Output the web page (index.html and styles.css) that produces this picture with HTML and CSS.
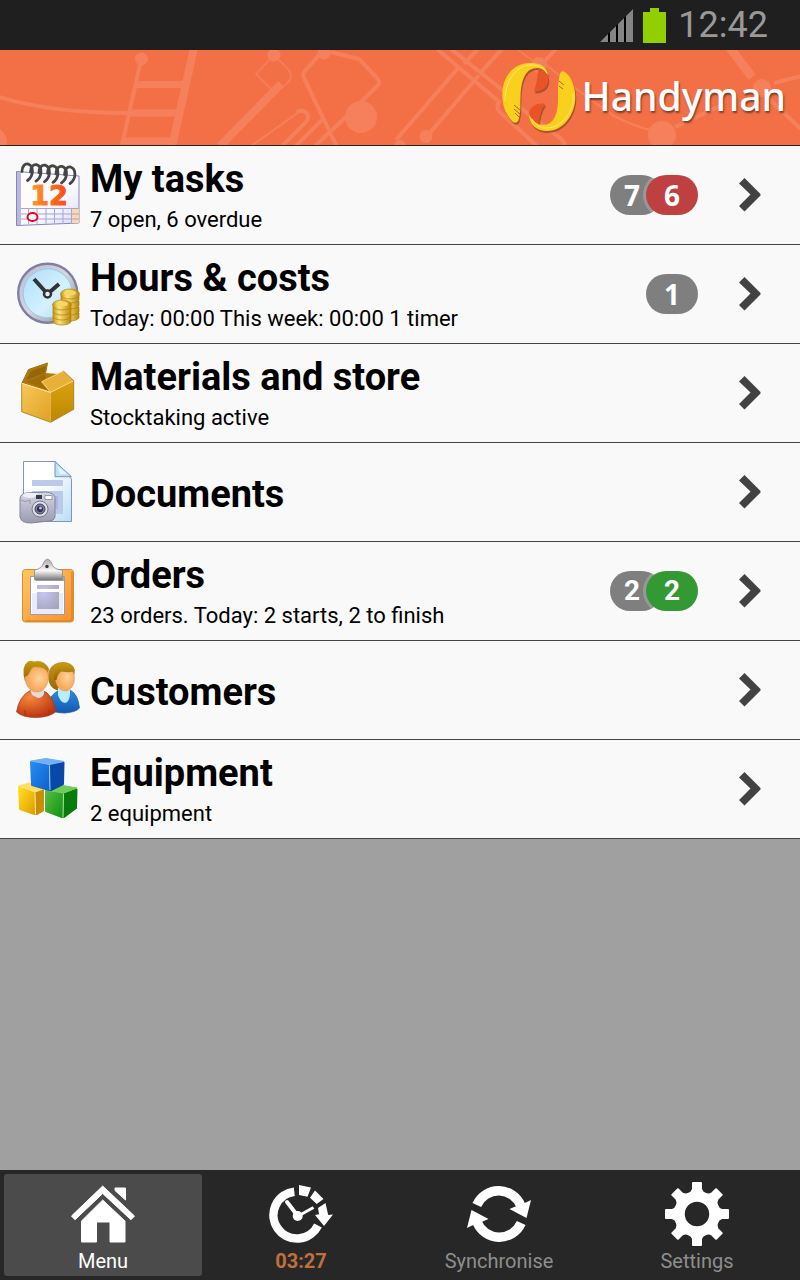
FILE: index.html
```html
<!DOCTYPE html>
<html lang="en">
<head>
<meta charset="utf-8">
<meta name="viewport" content="width=device-width, initial-scale=1">
<title>Handyman</title>
<link rel="stylesheet" href="styles.css">
</head>
<body>
<div class="status">
  <svg class="status-signal" viewBox="0 0 33 33" aria-hidden="true"><path fill="#000" d="M0 33 33 0v33z"/><path fill="#858585" d="M0 33 8 25v8zM10 33V23l6-6v16zM18 33V15l6-6v24zM26 33V7l7-7v33z"/></svg>
  <svg class="status-battery" viewBox="0 0 23 35" aria-hidden="true"><path fill="#92cf00" d="M0 4h7V0h9v4h7v31H0z"/></svg>
  <time class="status-time">12:42</time>
</div>

<header class="brand">
  <svg class="brand-art" viewBox="0 0 800 95" preserveAspectRatio="xMinYMin slice" aria-hidden="true">
    <g fill="none" stroke="#f6805b" stroke-width="4">
      <path d="M-4 46Q50 63 128 63"/>
      <path d="M141 10 122 95"/><path stroke-width="8" d="M194-2 172 97"/>
      <path stroke-width="7" d="M135 34.500h48M130 63h48M123 91h49"/>
      <path stroke-width="1.500" d="m270 9-14 15 16 16M278 9l9 9q8 8 0 15l-4 4"/>
      <path stroke-width="8" d="m281 34-61 62"/>
      <path stroke-width="2" d="m251 96 48-34"/><path d="M297 62c9-4 14 4 9 10l-24 24M324 68l-28 28"/>
      <path d="m321 3-16 18q-3 3-1 7l33 69M331 2l28 7 19 20q3 4-1 7l-18 18M347 66l-32 30"/>
      <path d="M437-1 497 50M451-1 510 46M510 50 560 88q6 5 4 10M478-1l-14 15M502-1l-20 22M458 18 396 90M479 25l-56 66"/>
      <path stroke-width="1.500" d="m517-1 24 18"/><path d="m556-1-14 15M500 50q-6 8 2 14l35 32"/>
      <path stroke-width="2" d="M545 14q38 31 69 52 20 10 36 14"/>
      <path d="m675 77 45-21M774 33l28-7"/><path stroke-width="9" d="m730-2 22 29"/>
      <path d="m768 48 34 32"/>
    </g>
    <g fill="#f6805b"><circle cx="-8" cy="92" r="15"/><circle cx="141.500" cy="9" r="6.500"/><circle cx="274" cy="5" r="6.500"/><circle cx="324" cy="3" r="6.500"/><circle cx="361" cy="67" r="16"/><circle cx="426" cy="86.500" r="6.500"/><circle cx="539" cy="15" r="8"/><circle cx="662" cy="85" r="14"/><circle cx="762" cy="38" r="9"/><circle cx="400" cy="96" r="6"/></g>
  </svg>
  <svg class="brand-mark" viewBox="0 0 78 74" aria-hidden="true">
    <defs>
      <path id="palms" d="M48.300 14.500C46 4 39 2 30 2 14 2 2.300 15 2.300 34c0 12 5 22 10.700 27 3 1.500 5.500.5 6-4 2-7 1-14 1.500-21C21 18 26 7 37 7c5 0 8 3 11.300 7.500zM60 13c1-4 4-3 6-1 6 5 9.300 14 9.300 24C75.300 54 63 70 47 70c-10 0-18-6-18-17 4 8 9 11 15 11 10-1 14-11 14-26 0-10 0-17 2-25z"/>
      <path id="fingers" d="M38.500 8c7 1 11 7 9.500 13-1 6-7 10-14 9.300 2.500-7 3.500-15 4.500-22.300zM45 43c-9-2-16 4-16 10 1 5 5 9 10 11 0-8 2-15 6-21z"/>
    </defs>
    <g transform="translate(1 2)" fill="#8d4428" opacity=".7"><use href="#palms"/><use href="#fingers"/></g>
    <use href="#fingers" fill="#ea5328"/>
    <use href="#palms" fill="#f9d01c"/>
    <path fill="none" stroke="#fce476" d="M5 40C5 20 16 4 31 4c8 0 13 3 16 8M73 33c2 18-12 34-26 34-7 0-12-3-15-9"/>
    <path fill="none" stroke="#a8662a" d="m14 44 6 5M14 48l6 5M15 52l4 4M59 20l5 4M59 25l4 3"/>
  </svg>
  <h1 class="brand-name">Handyman</h1>
</header>

<main class="content">
<ul class="menu">
  <li><a class="item" href="#tasks">
    <svg class="item-icon" viewBox="0 0 64 64" aria-hidden="true">
      <defs><linearGradient id="page" x1="0" y1="0" x2="1" y2="1"><stop offset="0" stop-color="#fff"/><stop offset=".6" stop-color="#fafaff"/><stop offset="1" stop-color="#d8d8f6"/></linearGradient><linearGradient id="fire" x1="0" y1="0" x2="1" y2="0"><stop offset="0" stop-color="#ff9a2e"/><stop offset="1" stop-color="#fb4910"/></linearGradient></defs>
      <path fill="url(#page)" stroke="#8585b5" d="M.5 9.500 63 14v47L.5 63.500z"/><path fill="#b9b9e6" d="M1 10h4v53H1z"/>
      <path fill="#ffd5aa" d="M55 47h8v14h-8z"/>
      <path fill="none" stroke="#a5a5d8" d="M5 46.500h58M5 52h58M5 57h58M12.500 47v15M21 47v15M30 47v15M38.500 47v15M47 47v15M55.500 47v15"/>
      <ellipse cx="16.500" cy="55" rx="5" ry="4" fill="#fff" stroke="#f00019" stroke-width="2"/>
      <text class="calendar-day" x="33" y="43" text-anchor="middle" fill="url(#fire)" stroke="url(#fire)">12</text>
      <g fill="none" stroke="#454545" stroke-width="2.800" stroke-linecap="round"><path id="ring" d="M6 9.500C6 4 9 1.500 12 2c6 2 6 12-.5 16.500"/><use href="#ring" x="8.500" y=".6"/><use href="#ring" x="17" y="1.200"/><use href="#ring" x="25.500" y="1.800"/><use href="#ring" x="34" y="2.400"/><use href="#ring" x="42.500" y="3"/></g>
    </svg>
    <span class="item-text"><span class="item-title">My tasks</span><span class="item-note">7 open, 6 overdue</span></span>
    <span class="badges"><span class="badge">7</span><span class="badge badge-red">6</span></span>
    <svg class="chevron" viewBox="0 0 22 34" aria-hidden="true"><path d="m5.500 0 16 16v1.500l-16 16L0 28l11.500-11.500L0 5.500z"/></svg>
  </a></li>
  <li><a class="item" href="#hours">
    <svg class="item-icon" viewBox="0 0 64 64" aria-hidden="true">
      <defs><linearGradient id="rim" x1="0" y1="0" x2="1" y2="1"><stop offset="0" stop-color="#b9bbd0"/><stop offset=".5" stop-color="#d7d7de"/><stop offset="1" stop-color="#86868f"/></linearGradient><linearGradient id="glass" x1="0" y1="0" x2="1" y2="1"><stop offset="0" stop-color="#aeddfb"/><stop offset=".6" stop-color="#d4f1ff"/><stop offset="1" stop-color="#a8d8f6"/></linearGradient><linearGradient id="gold"><stop offset="0" stop-color="#c8960f"/><stop offset=".35" stop-color="#fbe37b"/><stop offset="1" stop-color="#b98609"/></linearGradient></defs>
      <circle cx="31.700" cy="32.300" r="29.500" fill="url(#rim)" stroke="#7d80a4" stroke-width="2.400"/>
      <circle cx="31.700" cy="32.300" r="24.500" fill="url(#glass)" stroke="#9ac8ea"/>
      <g stroke="#333" stroke-width="4"><path d="M31.500 33 18 18M31.500 33 43 23"/></g><circle cx="31.500" cy="33" r="3.500" fill="#eee" stroke="#333" stroke-width="2.500"/>
      <g fill="url(#gold)" stroke="#b07f0a" stroke-width=".7">
        <path id="coin" d="M45 52v5c3 4 15 4 18 0v-5z"/><use href="#coin" y="-6"/><use href="#coin" y="-12"/><use href="#coin" y="-18"/><ellipse cx="54" cy="33" rx="9.500" ry="5"/>
        <use href="#coin" x="-8" y="4"/><use href="#coin" x="-8" y="-1"/><use href="#coin" x="-8" y="-6"/><ellipse cx="46" cy="44" rx="9.500" ry="5"/>
      </g>
      <ellipse cx="54" cy="32" rx="6" ry="2.500" fill="#f5d862"/><ellipse cx="46" cy="43" rx="6" ry="2.500" fill="#f5d862"/>
    </svg>
    <span class="item-text"><span class="item-title">Hours &amp; costs</span><span class="item-note">Today: 00:00 This week: 00:00 1 timer</span></span>
    <span class="badges"><span class="badge">1</span></span>
    <svg class="chevron" viewBox="0 0 22 34" aria-hidden="true"><path d="m5.500 0 16 16v1.500l-16 16L0 28l11.500-11.500L0 5.500z"/></svg>
  </a></li>
  <li><a class="item" href="#materials">
    <svg class="item-icon" viewBox="0 0 64 64" aria-hidden="true">
      <defs><linearGradient id="boxl" x1="0" y1="0" x2="1" y2="1"><stop offset="0" stop-color="#fac65b"/><stop offset="1" stop-color="#dda321"/></linearGradient><linearGradient id="boxr" x1="0" y1="0" x2="0" y2="1"><stop offset="0" stop-color="#d8a20f"/><stop offset="1" stop-color="#bd8700"/></linearGradient></defs>
      <path fill="#b27d0d" d="m6 23 24-10 12 1-16 8 9 10z"/>
      <path fill="#a06c08" d="m10 22 20-8-1 6-4 2 6 8z"/>
      <path fill="#b07a0a" stroke="#9d7117" d="m6 23 6.500-13.500L31.500 3l-2 10.500z"/>
      <path fill="#966507" d="m10 20 5-9 15-5-1.500 7z"/>
      <path fill="url(#boxl)" d="m5.700 23.300 29 9v30l-29-10.500z"/>
      <path fill="url(#boxr)" d="m34.700 32.300 23-11.600v28.600l-23 13z"/>
      <path fill="#e7b03b" stroke="#ffdc88" stroke-width=".8" d="m25.700 21.700 21.600-10.700 10.400 9.700-23 11.600z"/>
      <path fill="none" stroke="#ffe09a" d="m6 23.500 28.500 9"/><path fill="none" stroke="#a27612" stroke-width=".8" d="M5.700 23.300v28.500l29 10.500 23-13V20.700L47.300 11"/>
    </svg>
    <span class="item-text"><span class="item-title">Materials and store</span><span class="item-note">Stocktaking active</span></span>
    <svg class="chevron" viewBox="0 0 22 34" aria-hidden="true"><path d="m5.500 0 16 16v1.500l-16 16L0 28l11.500-11.500L0 5.500z"/></svg>
  </a></li>
  <li><a class="item" href="#documents">
    <svg class="item-icon" viewBox="0 0 64 64" aria-hidden="true">
      <defs><linearGradient id="doc" x1="0" y1="0" x2="1" y2="1"><stop offset=".4" stop-color="#fff"/><stop offset="1" stop-color="#b8dcf7"/></linearGradient><linearGradient id="cam" x1="0" y1="0" x2="0" y2="1"><stop offset="0" stop-color="#d7d7e4"/><stop offset=".5" stop-color="#b8b8cb"/><stop offset="1" stop-color="#9a9ab0"/></linearGradient></defs>
      <path fill="url(#doc)" stroke="#8095b8" d="M7.500 2.500H39l16.500 17.500v42.500h-48z"/>
      <path fill="#bfe2fa" stroke="#6e95c2" d="M39 2.500v15.200h16.500z"/><path fill="#e8f7ff" d="m41 7 3 8h7z"/>
      <path fill="#bccae9" d="M16 21h31v6H16zM16 32h31v23H16z"/><path fill="#a9bce0" d="M30 37h12v13H30z"/>
      <path fill="url(#cam)" stroke="#83839b" d="M4 40q0-5 6-6l20-1q8 1 9 5v20q-1 4-6 4l-18 2Q5 64 4 58z"/>
      <path fill="#eeeef7" d="M6 37q10 4 14 0l2-3H9z"/><path fill="#393950" d="M20 36h6v4h-6z"/><path fill="#fff" stroke="#82829b" stroke-width=".8" d="M29 36.500h7v4h-7z"/>
      <path fill="none" stroke="#8d8da5" stroke-width=".8" d="M5 41q4 3 9 0v4"/>
      <circle cx="24" cy="50" r="8" fill="#dedee8" stroke="#77778d"/><circle cx="24" cy="50" r="5" fill="#7a7a92" stroke="#44445a"/><circle cx="24" cy="50" r="3" fill="#2e2e50"/><circle cx="24.500" cy="49" r="1.500" fill="#b8bbeb"/>
    </svg>
    <span class="item-text"><span class="item-title">Documents</span></span>
    <svg class="chevron" viewBox="0 0 22 34" aria-hidden="true"><path d="m5.500 0 16 16v1.500l-16 16L0 28l11.500-11.500L0 5.500z"/></svg>
  </a></li>
  <li><a class="item" href="#orders">
    <svg class="item-icon" viewBox="0 0 64 64" aria-hidden="true">
      <defs><linearGradient id="board" x1="0" y1="0" x2="1" y2="1"><stop offset="0" stop-color="#ffc65f"/><stop offset="1" stop-color="#fa902b"/></linearGradient><linearGradient id="clip" x1="0" y1="0" x2="0" y2="1"><stop offset="0" stop-color="#aaa"/><stop offset=".55" stop-color="#f8f8f8"/><stop offset="1" stop-color="#777"/></linearGradient><radialGradient id="ink" cx=".3" cy=".3" r=".9"><stop offset="0" stop-color="#c6c6f5"/><stop offset="1" stop-color="#a4a4b4"/></radialGradient></defs>
      <rect x="6.500" y="11.500" width="51" height="52.500" rx="3" fill="url(#board)" stroke="#d18f3c"/>
      <path fill="none" stroke="#de8526" stroke-width="1.500" d="M56 14v47q0 2-2 2H9"/>
      <path fill="#fff" stroke="#9f97b5" d="M14.500 18.500h34v38h-34z"/><path fill="#e9e9ff" d="M16 35h31v21H16z"/>
      <path fill="url(#ink)" d="M21 27h22v4H21zM21 34h22v17H21z"/>
      <path fill="#786f68" opacity=".6" d="M20 19h28v4H20z"/>
      <path fill="url(#clip)" stroke="#8b8b8b" stroke-width=".8" d="M18.500 12q7-1 9-7c2-5 6-5 8 0q2 6 9 7h2v10h-28z"/><circle cx="31" cy="8.500" r="1.700" fill="#333"/>
    </svg>
    <span class="item-text"><span class="item-title">Orders</span><span class="item-note">23 orders. Today: 2 starts, 2 to finish</span></span>
    <span class="badges badges-narrow"><span class="badge">2</span><span class="badge badge-green">2</span></span>
    <svg class="chevron" viewBox="0 0 22 34" aria-hidden="true"><path d="m5.500 0 16 16v1.500l-16 16L0 28l11.500-11.500L0 5.500z"/></svg>
  </a></li>
  <li><a class="item" href="#customers">
    <svg class="item-icon" viewBox="0 0 64 64" aria-hidden="true">
      <defs><radialGradient id="skin" cx=".6" cy=".45"><stop offset="0" stop-color="#ffd399"/><stop offset="1" stop-color="#f5a95b"/></radialGradient><radialGradient id="redtop" cx=".35" cy=".25" r=".8"><stop offset="0" stop-color="#f7893c"/><stop offset="1" stop-color="#b93110"/></radialGradient><linearGradient id="bluetop" x1="0" y1="0" x2="0" y2="1"><stop offset="0" stop-color="#2a8ce6"/><stop offset="1" stop-color="#1558ae"/></linearGradient><linearGradient id="hair" x1="0" y1="0" x2="0" y2="1"><stop offset="0" stop-color="#c79a12"/><stop offset="1" stop-color="#956407"/></linearGradient></defs>
      <path fill="url(#hair)" d="M32 18C33 9 40 5 47 5c8 0 13 5 11.500 12L47 34q-15 0-15-16z"/>
      <path fill="url(#bluetop)" stroke="#1b5aa5" stroke-width=".7" d="M31 51q3-15 13-18h10q8 4 9.500 18-3 4-14.500 5-12 0-18-5z"/><path fill="#b9edff" d="M42 31h12v7q-1 7-5 8-5-1-7-8z"/>
      <ellipse cx="49" cy="21.500" rx="9.500" ry="12.500" fill="url(#skin)" stroke="#df9848" stroke-width=".6"/><path fill="url(#hair)" d="M38 23q0-14 10-16.500 10-1 10.500 7.500-3 2-13 .5-4 2-5 8.500z"/>
      <path fill="url(#redtop)" stroke="#a83816" stroke-width=".7" d="M.5 55Q3 39 15 33h11q12 5 13.500 22-6 5-19 5.500-14 0-20-5.500z"/>
      <path fill="#ddd" d="M14 32h14v5q-2 4-6 4l-6-3z"/>
      <path fill="url(#hair)" d="M9 24Q5 10 11 5.500q2-3 7-1Q28 2 33 12l-2 9H12z"/>
      <path fill="url(#skin)" stroke="#df9848" stroke-width=".6" d="M9 20c5-1 5-9 9-10q11-1 14 6c2 9-3 19-11 19S9 27 9 20z"/>
      <path fill="none" stroke="#9f3513" d="M9 53v5M33 53v5"/>
    </svg>
    <span class="item-text"><span class="item-title">Customers</span></span>
    <svg class="chevron" viewBox="0 0 22 34" aria-hidden="true"><path d="m5.500 0 16 16v1.500l-16 16L0 28l11.500-11.500L0 5.500z"/></svg>
  </a></li>
  <li><a class="item" href="#equipment">
    <svg class="item-icon" viewBox="0 0 64 64" aria-hidden="true">
      <defs><linearGradient id="bl" x1="0" y1="0" x2="1" y2="1"><stop offset="0" stop-color="#258cf0"/><stop offset="1" stop-color="#0d62cd"/></linearGradient><linearGradient id="ye" x1="0" y1="0" x2="1" y2="1"><stop offset="0" stop-color="#ffdf24"/><stop offset="1" stop-color="#e19e00"/></linearGradient><linearGradient id="gr" x1="0" y1="0" x2="1" y2="1"><stop offset="0" stop-color="#55be3d"/><stop offset="1" stop-color="#129116"/></linearGradient></defs>
      <g stroke-linejoin="round" stroke-width="2">
      <g><path fill="url(#ye)" stroke="url(#ye)" d="m3 31 15 6 .5 21L4 53z"/><path fill="#c98d06" stroke="#c98d06" d="m20 37 7-3v20.500L20.500 58z"/><path fill="#ffe064" stroke="#ffe064" stroke-width="1" d="m3 30 10-3 14.500 6L19 36z"/></g>
      <g><path fill="url(#gr)" stroke="url(#gr)" d="m30 35 16.500 3-.5 23-16-6z"/><path fill="#077c0c" stroke="#077c0c" d="m48.500 38 12-4.500-.5 18.500L48 61z"/><path fill="#6fcc58" stroke="#6fcc58" stroke-width="1" d="m29 34 15-5 17 3-13.500 5z"/></g>
      <g><path fill="url(#bl)" stroke="url(#bl)" d="m15 6 17.500 3.500L33 34l-17-5z"/><path fill="#0748a9" stroke="#0748a9" d="m34.500 9.500 13-3L47 28l-12 6z"/><path fill="#6fb0f6" stroke="#6fb0f6" stroke-width="1" d="m15 5 15-2.500 18 3-14.500 3z"/></g>
      <g fill="none" stroke-width="1"><path stroke="#9fcdfb" d="M33.500 9.500 34 34"/><path stroke="#a8e696" d="m47.500 38-.5 23"/><path stroke="#ffe889" d="m19 37 .5 21"/></g>
      </g>
    </svg>
    <span class="item-text"><span class="item-title">Equipment</span><span class="item-note">2 equipment</span></span>
    <svg class="chevron" viewBox="0 0 22 34" aria-hidden="true"><path d="m5.500 0 16 16v1.500l-16 16L0 28l11.500-11.500L0 5.500z"/></svg>
  </a></li>
</ul>
</main>

<nav class="tabs">
  <button class="tab tab-active" type="button" aria-current="page">
    <svg class="tab-icon" viewBox="0 0 64 64" aria-hidden="true"><g fill="#fff" stroke="#fff" stroke-linejoin="round"><path d="M31.700 4 63.500 34 60 37.800 31.700 11.500 4 37.800.5 34z"/><path d="M44 6h10.500v12L44 8.500z"/><path d="M31.700 18 54 39v21H39V40H25.500v20h-15V39z"/></g></svg>
    <span>Menu</span>
  </button>
  <button class="tab tab-timer" type="button">
    <svg class="tab-icon" viewBox="0 0 64 64" aria-hidden="true"><path fill="none" stroke="#fff" stroke-width="8.500" d="M49 43.500A23.500 23.500 0 1 1 25.300 9.700"/><path fill="#fff" d="m30 3 12 2.500-3.500 9.300L30 13zM46 8.500l8.500 8.500-6.800 5-6.700-6.300zM49 26l7.500-5 2.700 12 4.800-.5-9 11.500-9-11 4-.7z"/><g fill="none" stroke="#fff" stroke-linecap="round"><path stroke-width="4" d="M28 33 18 20"/><path stroke-width="3" stroke-linecap="butt" d="m31 33 13.500-7.500"/></g><circle cx="28.700" cy="34" r="5" fill="#fff"/></svg>
    <span>03:27</span>
  </button>
  <button class="tab" type="button">
    <svg class="tab-icon" viewBox="0 0 64 64" aria-hidden="true"><g id="half"><path fill="none" stroke="#fff" stroke-width="9.500" d="M9.800 23A24 24 0 0 1 54 24"/><path fill="#fff" d="m42.500 27 7-3L60 20l4-2-4.500 18z"/></g><use href="#half" transform="rotate(180 32 32)"/></svg>
    <span>Synchronise</span>
  </button>
  <button class="tab" type="button">
    <svg class="tab-icon" viewBox="0 0 64 64" aria-hidden="true"><circle cx="32" cy="32" r="17.500" fill="none" stroke="#fff" stroke-width="10.500"/><g fill="#fff"><path id="tooth" d="M27 1q0-1 1-1h8q1 0 1 1v6q1 3 4 4l-3 5H26l-3-5q3-1 4-4z"/><use href="#tooth" transform="rotate(45 32 32)"/><use href="#tooth" transform="rotate(90 32 32)"/><use href="#tooth" transform="rotate(135 32 32)"/><use href="#tooth" transform="rotate(180 32 32)"/><use href="#tooth" transform="rotate(225 32 32)"/><use href="#tooth" transform="rotate(270 32 32)"/><use href="#tooth" transform="rotate(315 32 32)"/></g></svg>
    <span>Settings</span>
  </button>
</nav>
</body>
</html>
```

FILE: styles.css
```css
* { box-sizing: border-box; }

body {
  display: flex;
  flex-direction: column;
  min-height: 100vh;
  margin: 0;
  background: #a0a0a0;
  color: #000;
  font-family: Roboto, "Noto Sans", sans-serif;
}

svg { display: block; flex: none; }

.status {
  display: flex;
  justify-content: flex-end;
  align-items: center;
  gap: 10px;
  height: 50px;
  padding-right: 32px;
  background: #1f1f1f;
}

.status-signal { width: 33px; height: 33px; }
.status-battery { width: 23px; height: 35px; }

.status-time {
  margin-left: 2px;
  color: #999;
  font-size: 36px;
  line-height: 50px;
}

.brand {
  position: relative;
  display: flex;
  justify-content: flex-end;
  align-items: center;
  gap: 4px;
  height: 96px;
  padding-right: 14px;
  overflow: hidden;
  background: #f37047;
  border-bottom: 1px solid #222;
}

.brand-art {
  position: absolute;
  inset: 0;
  width: 100%;
  height: 100%;
}

.brand-mark { position: relative; width: 78px; height: 74px; }

.brand-name {
  position: relative;
  margin: 0;
  padding-bottom: 4px;
  color: #fff;
  font-family: "Noto Sans", "Open Sans", sans-serif;
  font-size: 39px;
  font-weight: 500;
  line-height: 52px;
  text-shadow: 1px 2px 2px #7a3c26;
}

.content { flex: 1; }

.menu { margin: 0; padding: 0; list-style: none; }

.item {
  display: flex;
  align-items: center;
  min-height: 99px;
  padding: 0 39px 0 16px;
  background: #f9f9f9;
  border-bottom: 1px solid #444;
  color: inherit;
  text-decoration: none;
}

.item-icon {
  width: 64px;
  height: 64px;
  margin-bottom: 2px;
  overflow: visible;
}

.calendar-day {
  font-family: "DejaVu Sans", sans-serif;
  font-size: 27px;
  font-weight: 700;
}

.item-text {
  display: flex;
  flex: 1;
  flex-direction: column;
  min-width: 0;
  padding: 4px 0 0 10px;
}

.item-title { font-size: 38px; font-weight: 700; line-height: 46px; }
.item-note { font-size: 22px; line-height: 36px; }

.badges {
  display: flex;
  font-family: "Noto Sans", sans-serif;
}

.badges-narrow { font-family: Roboto, sans-serif; }

.badge {
  width: 52px;
  border-radius: 20px;
  background: #7f7f7f;
  color: #fff;
  font-size: 28px;
  font-weight: 700;
  line-height: 40px;
  text-align: center;
}

.badge:not(:last-child) { padding-right: 8px; }

.badge + .badge {
  margin-left: -16px;
  box-shadow: 0 0 0 3px rgba(255, 255, 255, 0.2);
}

.badge-red { background: #be4041; }
.badge-green { background: #339933; }

.chevron {
  width: 22px;
  height: 34px;
  margin-left: 41px;
  fill: #424242;
}

.tabs {
  display: flex;
  padding: 4px;
  background: #272727;
}

.tab {
  display: flex;
  flex: 1;
  flex-direction: column;
  align-items: center;
  padding: 8px 0 0;
  border: 0;
  border-radius: 3px;
  background: transparent;
  color: #8e8e8e;
  font: 400 20px/30px Roboto, sans-serif;
}

.tab-active { background: #4b4b4b; color: #fff; }
.tab-timer { color: #c0703a; font-weight: 700; }
.tab-icon { width: 64px; height: 64px; }
```
